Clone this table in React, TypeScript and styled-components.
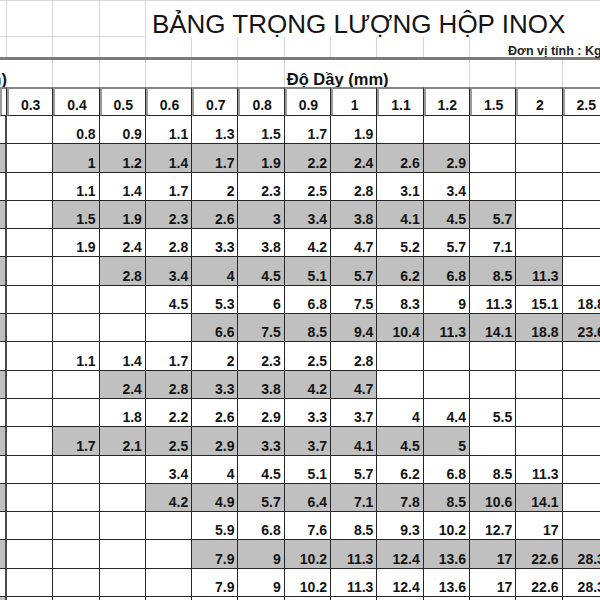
import React from 'react';
import styled, { createGlobalStyle } from 'styled-components';

const GlobalStyle = createGlobalStyle`
  html, body { margin: 0; padding: 0; background: #fff; }
  body {
    font-family: "Liberation Sans", Arial, sans-serif;
    color: #111;
    overflow: hidden;
  }
`;

const COLS = '7px repeat(13, 46.3px)';
const GRID = '#d6d6d6';
const INK = '#262626';
const SHADE = '#c0c0c0';

const Sheet = styled.div`
  width: 600px;
  height: 600px;
  overflow: hidden;
  background: #fff;
`;

const Row = styled.div<{ $h: number; $thick?: boolean; $top?: boolean }>`
  display: grid;
  grid-template-columns: ${COLS};
  width: 609px;
  height: ${(p) => p.$h}px;
  box-sizing: border-box;
  ${(p) => (p.$top ? `border-top: 1px solid ${GRID};` : '')}
  ${(p) => (p.$thick ? 'border-bottom: 3px solid #7b7b7b;' : '')}
`;

const GridCell = styled.div<{ $span?: number; $bottom?: boolean; $noRight?: boolean }>`
  grid-column: span ${(p) => p.$span ?? 1};
  box-sizing: border-box;
  min-width: 0;
  border-right: ${(p) => (p.$noRight ? 'none' : `1px solid ${GRID}`)};
  border-bottom: ${(p) => (p.$bottom ? `1px solid ${GRID}` : 'none')};
`;

const TitleCell = styled(GridCell)`
  display: flex;
  align-items: flex-end;
  padding-left: 6px;
  font-size: 26px;
  line-height: 1;
  white-space: nowrap;
  color: #141414;
`;

const UnitCell = styled(GridCell)`
  display: flex;
  align-items: flex-end;
  padding-left: 38px;
  font-size: 12.5px;
  font-weight: bold;
  line-height: 1;
  white-space: nowrap;
  color: #222;
`;

const CaptionCell = styled(GridCell)<{ $pad?: number }>`
  display: flex;
  align-items: flex-end;
  padding-left: ${(p) => p.$pad ?? 0}px;
  font-size: 16.5px;
  font-weight: bold;
  line-height: 1;
  white-space: nowrap;
`;

const OverflowLabel = styled.div`
  display: flex;
  justify-content: flex-end;
  align-items: flex-end;
  width: 7px;
  font-size: 16.5px;
  font-weight: bold;
  line-height: 1;
  white-space: nowrap;
  margin-right: -5px;
  box-sizing: border-box;
`;

const HeadCell = styled.div`
  box-sizing: border-box;
  display: flex;
  align-items: flex-end;
  justify-content: center;
  padding-bottom: 3px;
  border-top: 2px solid #858585;
  border-left: 2px solid #9a9a9a;
  border-right: 1px solid ${INK};
  border-bottom: 1px solid ${INK};
  font-size: 14px;
  font-weight: bold;
  line-height: 1;
  background: #fff;
`;

const LeftCell = styled.div<{ $shade?: boolean }>`
  box-sizing: border-box;
  background: ${(p) => (p.$shade ? SHADE : '#fff')};
  border-right: 2px solid #4a4a4a;
  border-bottom: 1px solid ${INK};
`;

const DataCell = styled.div<{ $shade?: boolean }>`
  box-sizing: border-box;
  display: flex;
  align-items: flex-end;
  justify-content: flex-end;
  padding: 0 3px 2px 0;
  background: ${(p) => (p.$shade ? SHADE : '#fff')};
  border-right: 1px solid ${INK};
  border-bottom: 1px solid ${INK};
  font-size: 14px;
  font-weight: bold;
  line-height: 1;
  white-space: nowrap;
  color: #141414;
`;

const THICKNESS = ['0.3', '0.4', '0.5', '0.6', '0.7', '0.8', '0.9', '1', '1.1', '1.2', '1.5', '2', '2.5'];

type DataRow = { start: number; values: string[]; shade: boolean };

const ROWS: DataRow[] = [
  { start: 1, values: ['0.8', '0.9', '1.1', '1.3', '1.5', '1.7', '1.9'], shade: false },
  { start: 1, values: ['1', '1.2', '1.4', '1.7', '1.9', '2.2', '2.4', '2.6', '2.9'], shade: true },
  { start: 1, values: ['1.1', '1.4', '1.7', '2', '2.3', '2.5', '2.8', '3.1', '3.4'], shade: false },
  { start: 1, values: ['1.5', '1.9', '2.3', '2.6', '3', '3.4', '3.8', '4.1', '4.5', '5.7'], shade: true },
  { start: 1, values: ['1.9', '2.4', '2.8', '3.3', '3.8', '4.2', '4.7', '5.2', '5.7', '7.1'], shade: false },
  { start: 2, values: ['2.8', '3.4', '4', '4.5', '5.1', '5.7', '6.2', '6.8', '8.5', '11.3'], shade: true },
  { start: 3, values: ['4.5', '5.3', '6', '6.8', '7.5', '8.3', '9', '11.3', '15.1', '18.8'], shade: false },
  { start: 4, values: ['6.6', '7.5', '8.5', '9.4', '10.4', '11.3', '14.1', '18.8', '23.6'], shade: true },
  { start: 1, values: ['1.1', '1.4', '1.7', '2', '2.3', '2.5', '2.8'], shade: false },
  { start: 2, values: ['2.4', '2.8', '3.3', '3.8', '4.2', '4.7'], shade: true },
  { start: 2, values: ['1.8', '2.2', '2.6', '2.9', '3.3', '3.7', '4', '4.4', '5.5'], shade: false },
  { start: 1, values: ['1.7', '2.1', '2.5', '2.9', '3.3', '3.7', '4.1', '4.5', '5'], shade: true },
  { start: 3, values: ['3.4', '4', '4.5', '5.1', '5.7', '6.2', '6.8', '8.5', '11.3'], shade: false },
  { start: 3, values: ['4.2', '4.9', '5.7', '6.4', '7.1', '7.8', '8.5', '10.6', '14.1'], shade: true },
  { start: 4, values: ['5.9', '6.8', '7.6', '8.5', '9.3', '10.2', '12.7', '17'], shade: false },
  { start: 4, values: ['7.9', '9', '10.2', '11.3', '12.4', '13.6', '17', '22.6', '28.3'], shade: true },
  { start: 4, values: ['7.9', '9', '10.2', '11.3', '12.4', '13.6', '17', '22.6', '28.3'], shade: false },
  { start: 0, values: [], shade: false },
];

const ROW_H = 28.3;

export default function App() {
  return (
    <>
      <GlobalStyle />
      <Sheet>
        <Row $h={37} $top>
          <GridCell $bottom />
          <GridCell $bottom />
          <GridCell $bottom />
          <GridCell $bottom />
          <TitleCell $span={10} $noRight>BẢNG TRỌNG LƯỢNG HỘP INOX</TitleCell>
        </Row>
        <Row $h={23} $thick>
          {Array.from({ length: 11 }).map((_, i) => (
            <GridCell key={i} />
          ))}
          <UnitCell $span={3} $noRight>Đơn vị tính : Kg/m</UnitCell>
        </Row>
        <Row $h={27}>
          <OverflowLabel>(mm)</OverflowLabel>
          {Array.from({ length: 6 }).map((_, i) => (
            <GridCell key={i} />
          ))}
          <CaptionCell $span={4} $pad={2}>Độ Dầy (mm)</CaptionCell>
          <GridCell />
          <GridCell />
          <GridCell />
        </Row>
        <Row $h={29}>
          <HeadCell />
          {THICKNESS.map((t) => (
            <HeadCell key={t}>{t}</HeadCell>
          ))}
        </Row>
        {ROWS.map((row, r) => (
          <Row key={r} $h={ROW_H}>
            <LeftCell $shade={r % 2 === 1} />
            {THICKNESS.map((_, c) => {
              const idx = c - row.start;
              const has = idx >= 0 && idx < row.values.length;
              return (
                <DataCell key={c} $shade={row.shade && has}>
                  {has ? row.values[idx] : ''}
                </DataCell>
              );
            })}
          </Row>
        ))}
      </Sheet>
    </>
  );
}
